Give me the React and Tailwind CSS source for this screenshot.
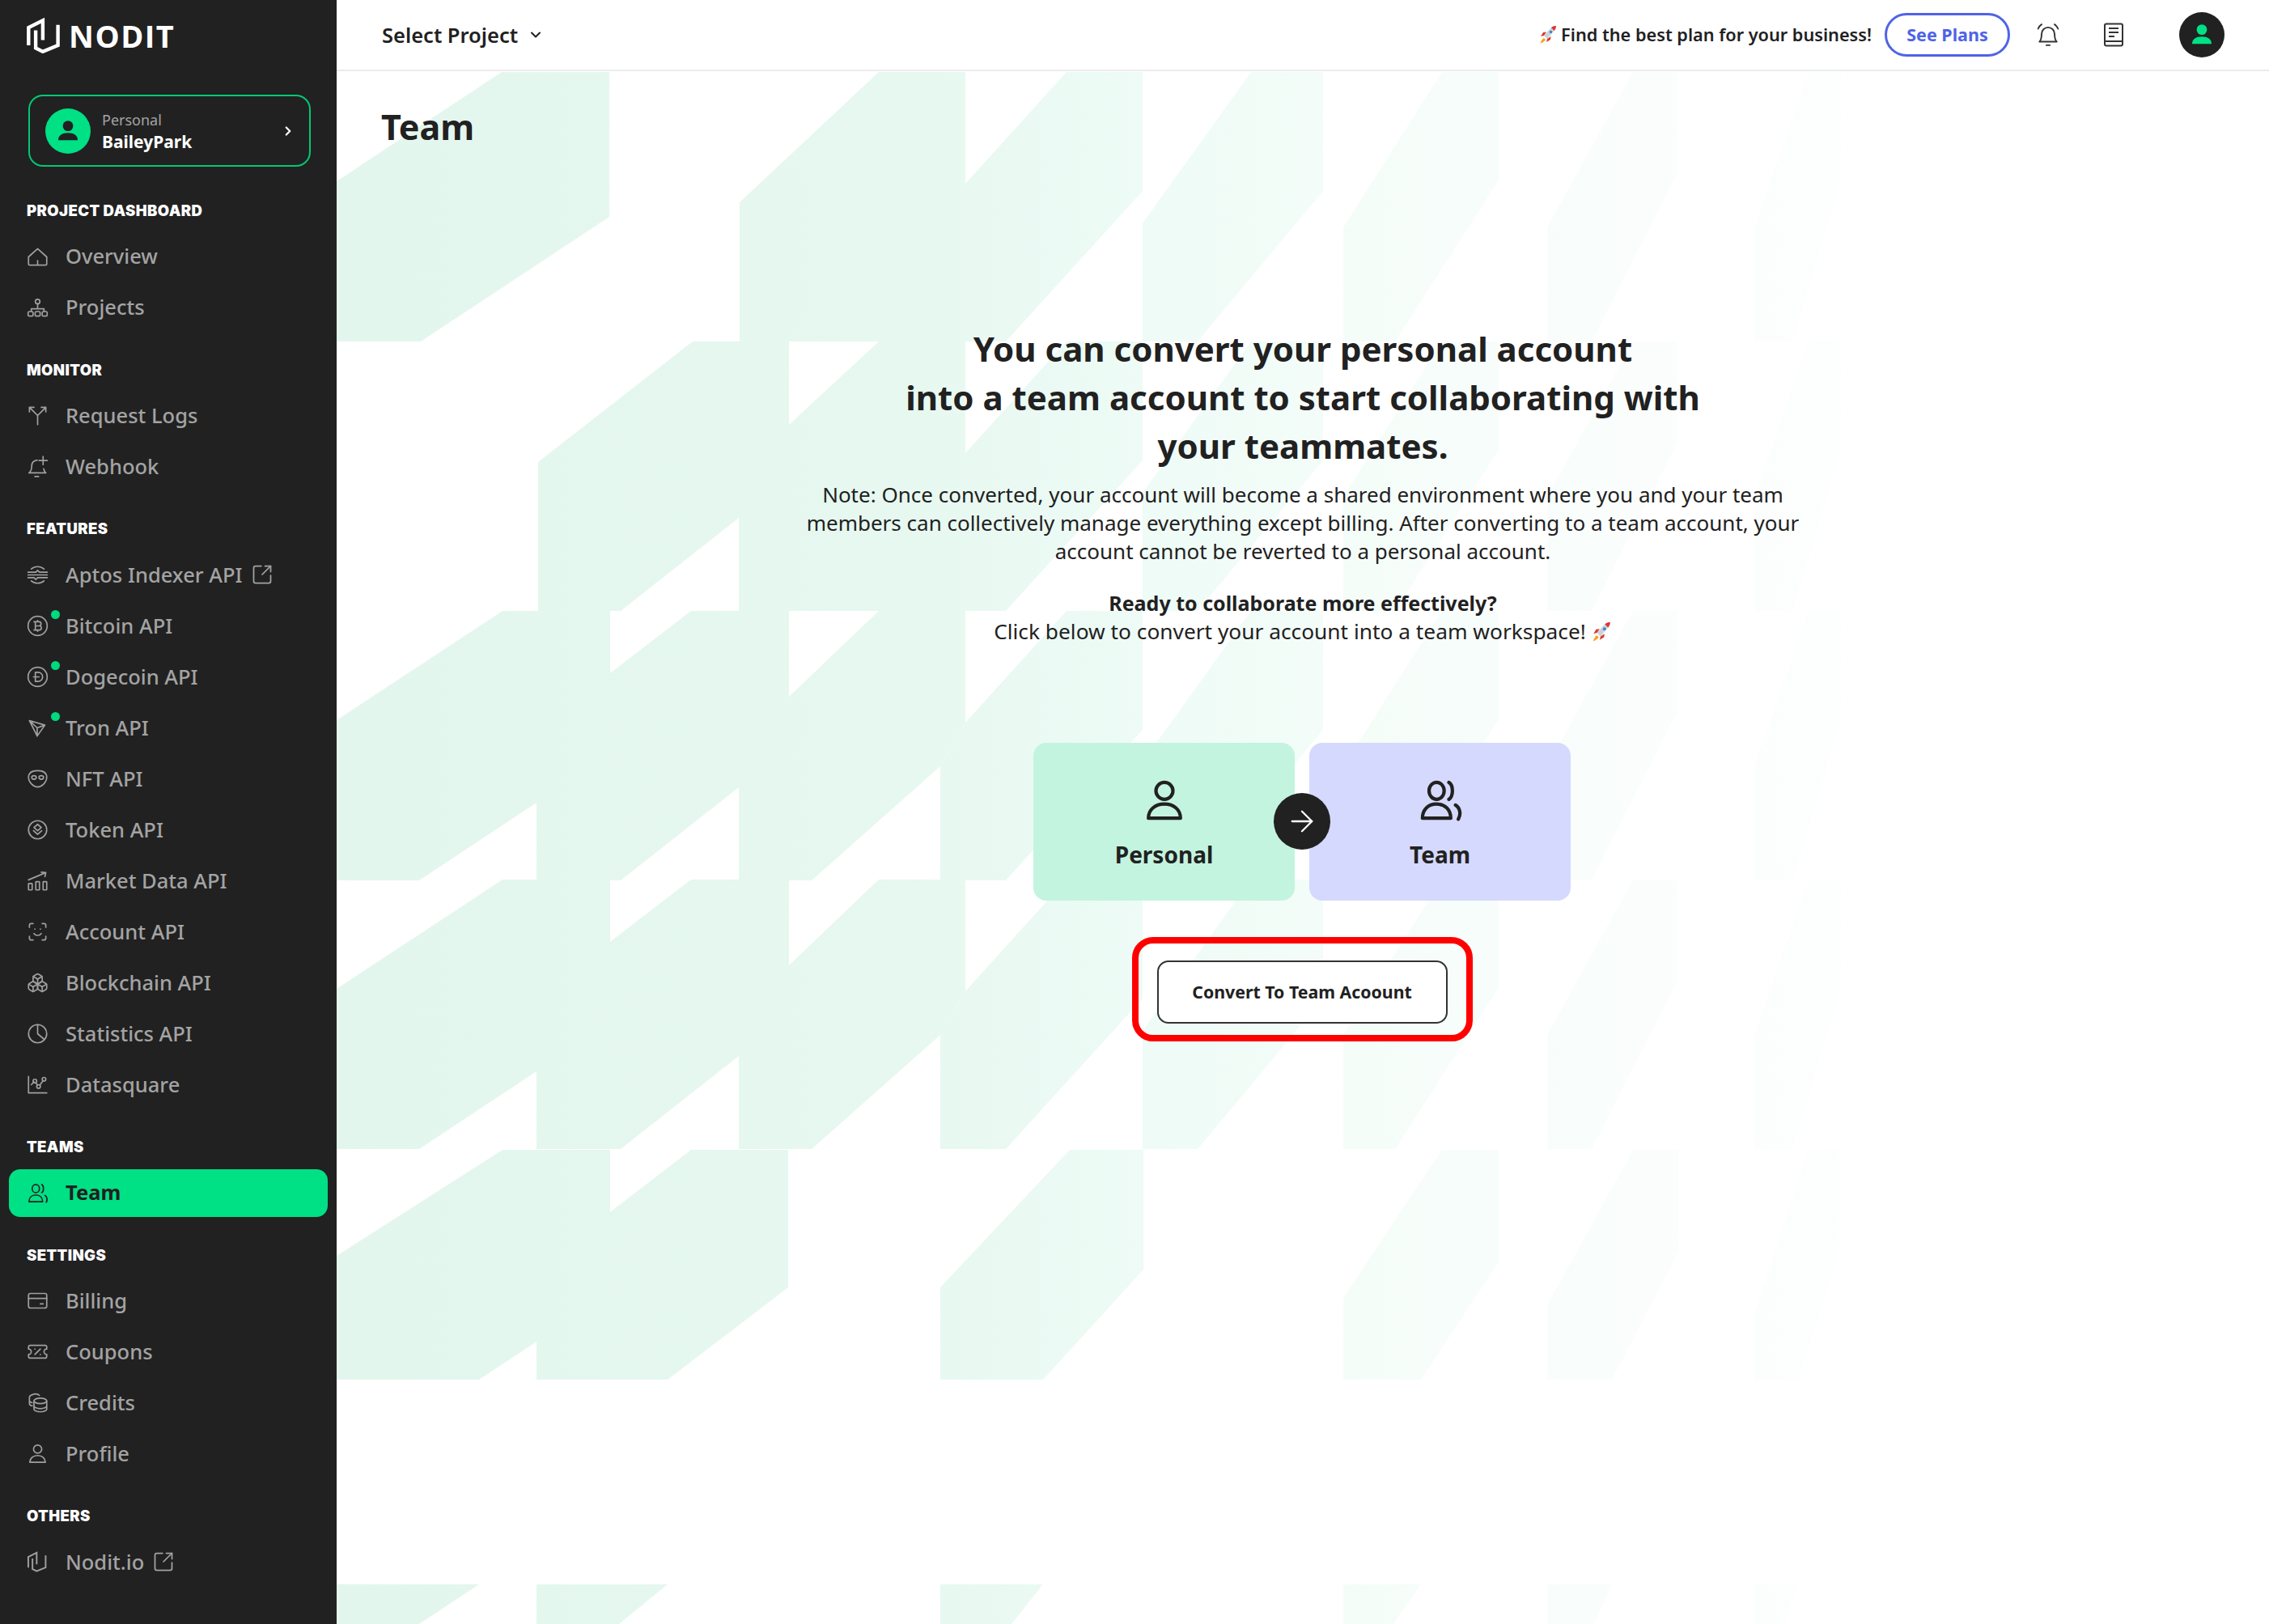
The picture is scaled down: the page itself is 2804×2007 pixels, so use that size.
import React from 'react';
import { ChevronDown, ChevronRight, ScanFace, Boxes, TicketPercent, ArrowRight, SquareArrowOutUpRight } from 'lucide-react';

const ROWS = [89, 422, 755, 1087];

// one row of the backdrop pattern, y is the top of the row
const rowShapes = (y, i) => {
    const shapes = [];
    if (i === 0) shapes.push([416, y + 135, 620, y, 753, y, 753, y + 179, 520, y + 333, 416, y + 333]);
    if (i >= 2) shapes.push([416, y + 135, 621, y, 663, y, 663, y + 237, 518, y + 333, 416, y + 333]);
    if (i >= 2) shapes.push([663, y, 754, y, 754, y + 77, 854, y, 913, y, 913, y + 218, 767, y + 333, 663, y + 333]);
    if (i === 1) shapes.push([665, y + 149, 856, y, 975, y, 975, y + 103, 1086, y, 1193, y, 1193, y + 333, 913, y + 333, 913, y + 218, 767, y + 333, 665, y + 333]);
    if (i === 0) shapes.push([914, y + 161, 1086, y, 1193, y, 1193, y + 333, 1003, y + 333, 1162, y + 192, 1003, y + 333, 914, y + 333]);
    if (i >= 2) shapes.push([913, y, 975, y, 975, y + 106, 1086, y, 1193, y, 1193, y + 138, 1162, y + 192, 1003, y + 333, 913, y + 333]);
    shapes.push([1162, y + 192, 1193, y + 138, 1318, y, 1412, y, 1412, y + 147, 1243, y + 333, 1162, y + 333]);
    shapes.push([1412, y + 187, 1546, y, 1635, y, 1635, y + 147, 1480, y + 333, 1412, y + 333]);
    shapes.push([1660, y + 192, 1782, y, 1852, y, 1852, y + 134, 1724, y + 333, 1660, y + 333]);
    shapes.push([1912, y + 192, 2018, y, 2073, y, 2073, y + 125, 1967, y + 333, 1912, y + 333]);
    shapes.push([2168, y + 192, 2235, y, 2275, y, 2275, y + 134, 2215, y + 333, 2168, y + 333]);
    return shapes;
};

const BOTTOM_SHAPES = [
    [416, 1552, 621, 1421, 663, 1421, 663, 1658, 592, 1705, 416, 1705],
    [663, 1421, 754, 1421, 754, 1498, 854, 1421, 974, 1421, 974, 1591, 825, 1705, 663, 1705],
    [1162, 1591, 1322, 1421, 1413, 1421, 1413, 1569, 1289, 1705, 1162, 1705],
    [1660, 1604, 1782, 1421, 1852, 1421, 1852, 1560, 1756, 1705, 1660, 1705],
    [1912, 1613, 2018, 1421, 2075, 1421, 2075, 1546, 1992, 1705, 1912, 1705],
    [2168, 1622, 2235, 1421, 2273, 1421, 2273, 1546, 2222, 1705, 2168, 1705],
    [416, 1958, 592, 1958, 518, 2007, 416, 2007],
    [663, 1958, 825, 1958, 765, 2007, 663, 2007],
    [1162, 1958, 1289, 1958, 1250, 2007, 1162, 2007],
    [1660, 1958, 1756, 1958, 1722, 2007, 1660, 2007],
    [1912, 1958, 1992, 1958, 1970, 2007, 1912, 2007],
    [2168, 1958, 2222, 1958, 2205, 2007, 2168, 2007],
];

const Backdrop = () => (
    <svg className="absolute inset-0 w-full h-full" viewBox="416 0 2388 2007" preserveAspectRatio="none">
        <defs>
            <linearGradient id="fade" gradientUnits="userSpaceOnUse" x1="416" y1="0" x2="2416" y2="0">
                <stop offset="0" stopColor="#e3f6ed" />
                <stop offset="0.35" stopColor="#e6f8f0" />
                <stop offset="0.5" stopColor="#eefbf6" />
                <stop offset="0.64" stopColor="#f5fdf9" />
                <stop offset="0.77" stopColor="#f9fdfc" />
                <stop offset="0.87" stopColor="#fcfefd" />
                <stop offset="1" stopColor="#fefefe" />
            </linearGradient>
        </defs>
        {ROWS.flatMap((y, i) => rowShapes(y, i)).concat(BOTTOM_SHAPES).map((p, i) => (
            <polygon key={i} points={p.join(' ')} fill="url(#fade)" />
        ))}
    </svg>
);

const Ico = ({ children, className = 'text-[#a0a0a0]' }) => (
    <svg viewBox="0 0 24 24" width="27" height="27" fill="none" stroke="currentColor" strokeWidth="1.5" strokeLinecap="round" strokeLinejoin="round" className={className}>
        {children}
    </svg>
);

const HomeIcon = () => <Ico><path d="M2 12 12 3l10 9v7.5a1.5 1.5 0 0 1-1.5 1.5h-17A1.5 1.5 0 0 1 2 19.500ZM12 21v-5" /></Ico>;
const ProjectsIcon = () => <Ico><circle cx="12" cy="5" r="2.500" /><path d="M12 7.500V13M5 16v-3h14v3" /><rect x="1.500" y="16" width="5.500" height="5" rx="1.500" /><rect x="9.250" y="16" width="5.500" height="5" rx="1.500" /><rect x="17" y="16" width="5.500" height="5" rx="1.500" /></Ico>;
const LogsIcon = () => <Ico><path d="M12 22V12L3 3M12 12l9-9M3 8V3h5M16 3h5v5" /></Ico>;
const WebhookIcon = () => <Ico><path d="M2.500 19c2-1.500 3-3.500 3-7.500 0-3.500 2.500-6 6-6.500M2.500 19H21c-1.200-1-2-2.500-2.300-4.500M9 23h4M18 1v9M13.500 5.500h9" /></Ico>;
const AptosIcon = () => <Ico><path d="M5 5.500C9 2 15 2 19 5.500M5 18.500c4 3.500 10 3.500 14 0M1.500 9H10l2-2 2 2h8.500M1.500 15H8l2 2 2-2h10.500M1.500 12h21" /></Ico>;
const BitcoinIcon = () => <Ico><circle cx="12" cy="12" r="10.500" /><path d="M9.500 7.500h4a2.200 2.200 0 0 1 0 4.500h-4zm0 4.500h4.800a2.300 2.300 0 0 1 0 4.500H9.500zM9.500 7.500v9M8 7.500h2M8 16.500h2M12 6v1.500M12 16.500V18" /></Ico>;
const DogeIcon = () => <Ico><circle cx="12" cy="12" r="10.500" /><path d="M9.500 7h3a5 5 0 0 1 0 10h-3zM7.500 12h6" /></Ico>;
const TronIcon = () => <Ico><path d="M3 4l17 5-8.500 12zM3 4l8.500 8 8.500-3M11.500 12l0 9" /></Ico>;
const NftIcon = () => <Ico><path d="M12 3c6 0 10 2.500 10 7.500C22 16 16 21 12 21S2 16 2 10.500C2 5.500 6 3 12 3Z" /><ellipse cx="8" cy="10.500" rx="2.500" ry="2" /><ellipse cx="16" cy="10.500" rx="2.500" ry="2" /></Ico>;
const TokenIcon = () => <Ico><circle cx="12" cy="12" r="10" /><path d="m12 6 4 3.500-4 3.500-4-3.500zM7.500 13l4.500 4 4.500-4" /></Ico>;
const MarketIcon = () => <Ico><rect x="2" y="15" width="4" height="7" rx="0.500" /><rect x="10" y="13" width="4" height="9" rx="0.500" /><rect x="18" y="13" width="4" height="9" rx="0.500" /><path d="M2 11 21 3M16 2.500l5 .5-1 4.500" /></Ico>;
const StatsIcon = () => <Ico><circle cx="12" cy="12" r="10" /><path d="M12 2v10l7 6" /></Ico>;
const DataIcon = () => <Ico><path d="M2 3v18h20" /><circle cx="9" cy="8" r="2" /><circle cx="13" cy="14" r="2" /><circle cx="19" cy="6" r="2" /><path d="m5 12 3-3M10 10l2 2.500M14.500 12.500 18 7.500" /></Ico>;
const TeamIcon = ({ className, size = 27, width = 1.5 }) => (
    <svg viewBox="0 0 24 24" width={size} height={size} fill="none" stroke="currentColor" strokeWidth={width} strokeLinecap="round" strokeLinejoin="round" className={className}>
        <ellipse cx="10" cy="7" rx="4" ry="4.500" />
        <path d="M2.500 21.500c0-4.500 3-7.500 7.500-7.500s7.500 3 7.500 7.500zM16.500 2.500c2.500 1.500 2.500 7.500 0 9M20 14.500c2.500 1.500 3 5 1.500 7.500" />
    </svg>
);
const PersonIcon = ({ className, size = 27, width = 1.5 }) => (
    <svg viewBox="0 0 24 24" width={size} height={size} fill="none" stroke="currentColor" strokeWidth={width} strokeLinecap="round" strokeLinejoin="round" className={className}>
        <ellipse cx="12" cy="7" rx="4.500" ry="4.500" />
        <path d="M3.500 21.500c0-4.500 3.500-7.500 8.500-7.500s8.500 3 8.500 7.500z" />
    </svg>
);
const BillingIcon = () => <Ico><rect x="2" y="4" width="20" height="16" rx="2" /><path d="M2 9.500h20M15 15.500h3" /></Ico>;
const CreditsIcon = () => <Ico><ellipse cx="15" cy="10" rx="7" ry="3" /><path d="M8 10v9c0 1.500 3 3 7 3s7-1.500 7-3v-9M8 15.500c0 1.500 3 3 7 3s7-1.500 7-3M14 4c-1.500-1.500-4-2-6-1.500S3 4 3 6v7c0 1 1 2 3 2.500M3 9.500c0 1 1 2 3 2.500" /></Ico>;

const LogoMark = ({ size, width, className }) => (
    <svg viewBox="0 0 40 40" width={size} height={size} fill="none" stroke="currentColor" strokeWidth={width} strokeLinejoin="miter" className={className}>
        <path d="M3 31V11L19 3v22" />
        <path d="M36 8v23l-17 7-8-4V14" />
    </svg>
);

const RocketIcon = ({ size }) => (
    <svg viewBox="0 0 24 24" width={size} height={size}>
        <path d="M7 13 16 3c2-1.500 4-2 6-2-.2 2.500-1 4.500-2.500 6L11 17z" fill="#c9d3dc" />
        <path d="M16 3c2-1.500 4-2 6-2-.2 2.500-1 4.500-2.500 6z" fill="#e5322d" />
        <circle cx="15.500" cy="8.500" r="1.800" fill="#3b88c3" />
        <path d="M7 13l-4 1 3-5 4-.5zM11 17l-1 4 5-3 .5-4z" fill="#d83a34" />
        <path d="M7 16c-2 1-3.500 3.500-4.500 6.500 3-1 5.500-2.500 6.500-4.500z" fill="#f7a21b" />
    </svg>
);

const NAV = [
    { title: 'PROJECT DASHBOARD', items: [
        { label: 'Overview', icon: <HomeIcon /> },
        { label: 'Projects', icon: <ProjectsIcon /> },
    ] },
    { title: 'MONITOR', items: [
        { label: 'Request Logs', icon: <LogsIcon /> },
        { label: 'Webhook', icon: <WebhookIcon /> },
    ] },
    { title: 'FEATURES', items: [
        { label: 'Aptos Indexer API', icon: <AptosIcon />, external: true },
        { label: 'Bitcoin API', icon: <BitcoinIcon />, dot: true },
        { label: 'Dogecoin API', icon: <DogeIcon />, dot: true },
        { label: 'Tron API', icon: <TronIcon />, dot: true },
        { label: 'NFT API', icon: <NftIcon /> },
        { label: 'Token API', icon: <TokenIcon /> },
        { label: 'Market Data API', icon: <MarketIcon /> },
        { label: 'Account API', icon: <ScanFace size={27} strokeWidth={1.5} className="text-[#a0a0a0]" /> },
        { label: 'Blockchain API', icon: <Boxes size={27} strokeWidth={1.5} className="text-[#a0a0a0]" /> },
        { label: 'Statistics API', icon: <StatsIcon /> },
        { label: 'Datasquare', icon: <DataIcon /> },
    ] },
    { title: 'TEAMS', items: [
        { label: 'Team', icon: <TeamIcon className="text-[#212121]" />, active: true },
    ] },
    { title: 'SETTINGS', items: [
        { label: 'Billing', icon: <BillingIcon /> },
        { label: 'Coupons', icon: <TicketPercent size={27} strokeWidth={1.5} className="text-[#a0a0a0]" /> },
        { label: 'Credits', icon: <CreditsIcon /> },
        { label: 'Profile', icon: <PersonIcon className="text-[#a0a0a0]" /> },
    ] },
    { title: 'OTHERS', items: [
        { label: 'Nodit.io', icon: <LogoMark size={26} width={3} className="text-[#a0a0a0]" />, external: true },
    ] },
];

const NavRow = ({ item }) => (
    <div className={`h-[63px] flex items-center ${item.active ? 'px-[11px]' : 'px-[33px]'}`}>
        <div className={`flex items-center ${item.active ? 'w-full h-[59px] px-[22px] bg-[#00e085] rounded-[14px]' : ''}`}>
            <div className="relative w-[27px] h-[27px] mr-[21px] shrink-0">
                {item.icon}
                {item.dot && <span className="absolute -top-[6px] -right-[14px] w-[11px] h-[11px] rounded-full bg-[#00d97e]"></span>}
            </div>
            <span className={`text-[25.500px] leading-none ${item.active ? 'font-bold text-[#212121]' : 'font-medium text-[#a3a3a3]'}`}>{item.label}</span>
            {item.external && <SquareArrowOutUpRight size={28} strokeWidth={1.5} className="ml-[10px] text-[#a3a3a3]" />}
        </div>
    </div>
);

const Sidebar = () => (
    <aside className="w-[416px] shrink-0 h-full bg-[#212121] relative z-10">
        <div className="h-[98px] pt-[22px] pl-[32px] flex items-start text-white">
            <LogoMark size={44} width={4} />
            <span className="ml-[9px] text-[38px] leading-[44px] font-bold tracking-[1.500px]" style={{ fontFamily: '"Open Sans", sans-serif' }}>NODIT</span>
        </div>
        <div className="mt-[19px] ml-[35px] mr-[32px] h-[89px] border-2 border-[#00c974] rounded-[18px] flex items-center pl-[19px] pr-[17px]">
            <div className="w-[56px] h-[56px] rounded-full bg-[#00e085] flex items-center justify-center">
                <UserGlyph />
            </div>
            <div className="ml-[14px] flex-1">
                <div className="text-[18px] leading-[27px] text-[#a3a3a3]">Personal</div>
                <div className="text-[21px] leading-[27px] font-bold text-white">BaileyPark</div>
            </div>
            <ChevronRight size={18} strokeWidth={3} className="text-white" />
        </div>
        <nav className="mt-[43px] flex flex-col gap-[34.200px]">
            {NAV.map(section => (
                <section key={section.title}>
                    <h3 className="h-[20px] px-[33px] mb-[16.500px] text-[18.500px] leading-[22px] font-black text-white tracking-[0.400px]" style={{ fontFamily: 'Inter, sans-serif' }}>{section.title}</h3>
                    {section.items.map(item => <NavRow key={item.label} item={item} />)}
                </section>
            ))}
        </nav>
    </aside>
);

const UserGlyph = ({ color = '#212121' }) => (
    <svg viewBox="0 0 24 24" width="34" height="34" fill={color}>
        <circle cx="12" cy="7.500" r="4.500" />
        <path d="M3.500 20c0-4.500 3.500-6.500 8.500-6.500s8.500 2 8.500 6.500z" />
    </svg>
);

const Header = () => (
    <header className="relative h-[88px] bg-white border-b-2 border-[#ececec] flex items-center pl-[56px] text-[#212121]">
        <span className="text-[25.500px] font-semibold">Select Project</span>
        <ChevronDown size={20} strokeWidth={2.500} className="ml-[12px]" />
        <div className="ml-auto flex items-center">
            <RocketIcon size={24} />
            <span className="ml-[4px] text-[21.700px] font-semibold">Find the best plan for your business!</span>
            <button className="ml-[16px] w-[155px] h-[54px] rounded-full border-[3px] border-[#4f63e7] text-[#4f63e7] text-[21.500px] font-bold">See Plans</button>
            <svg viewBox="0 0 26 28" width="28" height="30" fill="none" stroke="#333" strokeWidth="1.800" strokeLinecap="round" strokeLinejoin="round" className="ml-[33px]">
                <path d="M3 22c2-2 2.500-4 2.500-9a7.500 7.500 0 0 1 15 0c0 5 .5 7 2.500 9zM11 26h4M1.500 7C2.500 4.500 4 3 5.500 2M24.500 7c-1-2.500-2.500-4-4-5" />
            </svg>
            <svg viewBox="0 0 26 30" width="26" height="30" fill="none" stroke="#333" strokeWidth="2" className="ml-[54px]">
                <rect x="2" y="1.500" width="22" height="27" rx="2" />
                <path d="M2 23h22M7 7h12M7 12h12M7 17h7" />
            </svg>
            <div className="ml-[68px] mr-[55px] w-[56px] h-[56px] rounded-full bg-[#212121] flex items-center justify-center">
                <UserGlyph color="#00e085" />
            </div>
        </div>
    </header>
);

const Tile = ({ label, bg, children }) => (
    <div className={`w-[323px] h-[195px] rounded-[16px] ${bg} flex flex-col items-center pt-[43px] text-[#212121]`}>
        {children}
        <span className="mt-[19px] text-[28px] leading-[40px] font-bold">{label}</span>
    </div>
);

const Main = () => (
    <main className="relative flex-1 h-full bg-white">
        <Backdrop />
        <div className="relative h-full flex flex-col">
            <Header />
            <h1 className="mt-[42px] ml-[55px] text-[43px] leading-[54px] font-bold text-[#212121]">Team</h1>
            <div className="mt-[217px] flex flex-col items-center text-[#212121]">
                <h2 className="text-[42px] leading-[60px] font-bold text-center">
                    You can convert your personal account<br />
                    into a team account to start collaborating with<br />
                    your teammates.
                </h2>
                <p className="mt-[13px] text-[26px] leading-[35px] text-center">
                    Note: Once converted, your account will become a shared environment where you and your team<br />
                    members can collectively manage everything except billing. After converting to a team account, your<br />
                    account cannot be reverted to a personal account.
                </p>
                <p className="mt-[29px] text-[26px] leading-[35px] text-center">
                    <span className="font-bold text-[25px]">Ready to collaborate more effectively?</span><br />
                    <span className="inline-flex items-center gap-[6px] text-[26.300px]">Click below to convert your account into a team workspace! <RocketIcon size={26} /></span>
                </p>
                <div className="relative mt-[120px] ml-[-2px] flex gap-[18px]">
                    <Tile label="Personal" bg="bg-[#c3f4df]"><PersonIcon size={56} width={1.800} /></Tile>
                    <Tile label="Team" bg="bg-[#d5d9fd]"><TeamIcon size={56} width={1.800} /></Tile>
                    <div className="absolute left-[297px] top-[62px] w-[70px] h-[70px] rounded-full bg-[#212121] flex items-center justify-center">
                        <ArrowRight size={42} strokeWidth={1.300} className="text-white" />
                    </div>
                </div>
                <div className="mt-[45px] ml-[-2px] border-[8px] border-[#ff0000] rounded-[26px] pt-[21px] pb-[14px] px-[23px]">
                    <button className="block w-[359px] h-[78px] bg-white border-2 border-[#333333] rounded-[14px] text-[21.300px] font-bold text-[#212121]">Convert To Team Acoount</button>
                </div>
            </div>
        </div>
    </main>
);

export default function App() {
    return (
        <div className="flex w-full h-screen overflow-hidden bg-white" style={{ fontFamily: '"Noto Sans", sans-serif' }}>
            <Sidebar />
            <Main />
        </div>
    );
}
